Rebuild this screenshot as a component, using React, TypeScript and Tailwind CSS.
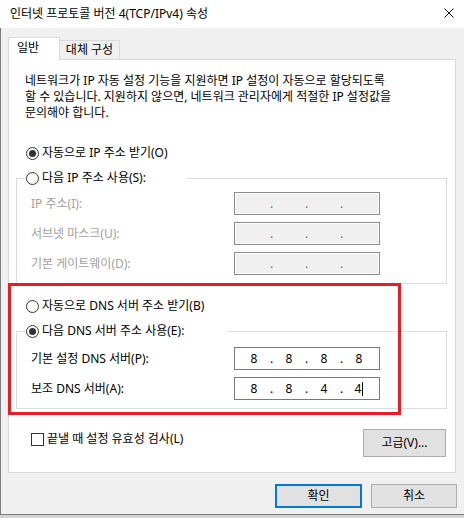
import React from "react";

type IpFieldProps = {
  values?: string[];
  disabled?: boolean;
  caret?: boolean;
};

function Radio({ checked }: { checked?: boolean }) {
  return (
    <span className="flex h-[13px] w-[13px] shrink-0 items-center justify-center rounded-full border border-[#333333] bg-white">
      {checked && <span className="h-[7px] w-[7px] rounded-full bg-[#333333]" />}
    </span>
  );
}

function IpField({ values, disabled, caret }: IpFieldProps) {
  const parts = values ?? ["", "", "", ""];
  return (
    <div
      className={`flex h-[23px] w-[146px] items-center border pl-[6px] ${
        disabled
          ? "border-[#8c8c8c] bg-[#f0f0f0] text-[#6d6d6d] shadow-[inset_0_0_0_1px_#ffffff]"
          : "border-[#7a7a7a] bg-white text-black"
      }`}
    >
      {parts.map((p, i) => (
        <React.Fragment key={i}>
          <span className="flex w-[26px] items-center justify-center">
            {p}
            {caret && i === 3 && <span className="ml-px inline-block h-[14px] w-px bg-black" />}
          </span>
          {i < 3 && <span className="w-[9px] text-center">.</span>}
        </React.Fragment>
      ))}
    </div>
  );
}

function FieldRow({
  label,
  disabled,
  values,
  caret,
}: {
  label: string;
  disabled?: boolean;
  values?: string[];
  caret?: boolean;
}) {
  return (
    <div className="flex items-center pl-[14px]">
      <span className={`w-[203px] ${disabled ? "text-[#a0a0a0]" : "text-black"}`}>{label}</span>
      <IpField values={values} disabled={disabled} caret={caret} />
    </div>
  );
}

export default function App() {
  return (
    <div className="relative h-[518px] w-[464px] bg-[#d4d4d4] font-['Noto_Sans','Noto_Sans_CJK_KR',sans-serif] text-[12px] leading-[16px] text-black">
      {/* title bar */}
      <div className="flex h-[28px] items-center justify-between bg-white pl-[10px] pr-[10px]">
        <span>인터넷 프로토콜 버전 4(TCP/IPv4) 속성</span>
        <svg width="10" height="10" viewBox="0 0 10 10" className="mb-[2px]">
          <path d="M0.5 0.5 L9.5 9.5 M9.5 0.5 L0.5 9.5" stroke="#111" strokeWidth="1" fill="none" />
        </svg>
      </div>

      <div className="flex h-[487px] flex-col border-b border-l border-[#7c7c7c] bg-[#f0f0f0] pl-[7px] pr-[7px] pt-[9px]">
        {/* tabs */}
        <div className="flex items-end">
          <div className="relative z-10 -mb-px flex h-[23px] w-[52px] items-start border border-b-0 border-[#d9d9d9] bg-white pl-[8px] pt-[2px]">
            일반
          </div>
          <div className="flex h-[19px] w-[60px] items-center justify-center border-r border-t border-[#d9d9d9] bg-[#f0f0f0]">
            대체 구성
          </div>
        </div>

        {/* panel */}
        <div className="h-[414px] w-[448px] border border-[#d9d9d9] bg-white">
          <p className="whitespace-nowrap pl-[16px] pt-[13px] leading-[16px]">
            네트워크가 IP 자동 설정 기능을 지원하면 IP 설정이 자동으로 할당되도록
            <br />할 수 있습니다. 지원하지 않으면, 네트워크 관리자에게 적절한 IP 설정값을
            <br />
            문의해야 합니다.
          </p>

          <div className="mt-[24px] flex items-center gap-[3px] pl-[17px]">
            <Radio checked />
            <span>자동으로 IP 주소 받기(O)</span>
          </div>

          <fieldset className="ml-[7px] mt-[9px] w-[431px] border border-[#dcdcdc] p-0 pb-[8px]">
            <legend className="ml-[9px] w-[161px] p-0">
              <div className="flex h-[16px] items-center gap-[3px]">
                <Radio />
                <span>다음 IP 주소 사용(S):</span>
              </div>
            </legend>
            <div className="flex flex-col gap-[7px] pt-[6px]">
              <FieldRow label="IP 주소(I):" disabled />
              <FieldRow label="서브넷 마스크(U):" disabled />
              <FieldRow label="기본 게이트웨이(D):" disabled />
            </div>
          </fieldset>

          <div className="mt-[14px] flex items-center gap-[3px] pl-[17px]">
            <Radio />
            <span>자동으로 DNS 서버 주소 받기(B)</span>
          </div>

          <fieldset className="ml-[7px] mt-[9px] w-[431px] border border-[#dcdcdc] p-0 pb-[8px]">
            <legend className="ml-[9px] w-[202px] p-0">
              <div className="flex h-[16px] items-center gap-[3px]">
                <Radio checked />
                <span>다음 DNS 서버 주소 사용(E):</span>
              </div>
            </legend>
            <div className="flex flex-col gap-[7px] pt-[8px]">
              <FieldRow label="기본 설정 DNS 서버(P):" values={["8", "8", "8", "8"]} />
              <FieldRow label="보조 DNS 서버(A):" values={["8", "8", "4", "4"]} caret />
            </div>
          </fieldset>

          <div className="mt-[20px] flex items-start justify-between pl-[22px] pr-[9px]">
            <label className="mt-[2px] flex items-center gap-[3px]">
              <span className="h-[13px] w-[13px] border border-[#333333] bg-white" />
              <span>끝낼 때 설정 유효성 검사(L)</span>
            </label>
            <button className="flex h-[28px] w-[83px] items-center justify-center border border-[#adadad] bg-[#e1e1e1]">
              고급(V)...
            </button>
          </div>
        </div>

        {/* dialog buttons */}
        <div className="mt-[11px] flex justify-end gap-[9px]">
          <button className="flex h-[24px] w-[87px] items-center justify-center border-2 border-[#0078d7] bg-[#e1e1e1]">
            확인
          </button>
          <button className="flex h-[24px] w-[86px] items-center justify-center border border-[#adadad] bg-[#e1e1e1]">
            취소
          </button>
        </div>
      </div>

      {/* annotation */}
      <div className="pointer-events-none absolute left-[8px] top-[283px] h-[132px] w-[393px] border-[3px] border-[#ed1c24]" />
    </div>
  );
}
